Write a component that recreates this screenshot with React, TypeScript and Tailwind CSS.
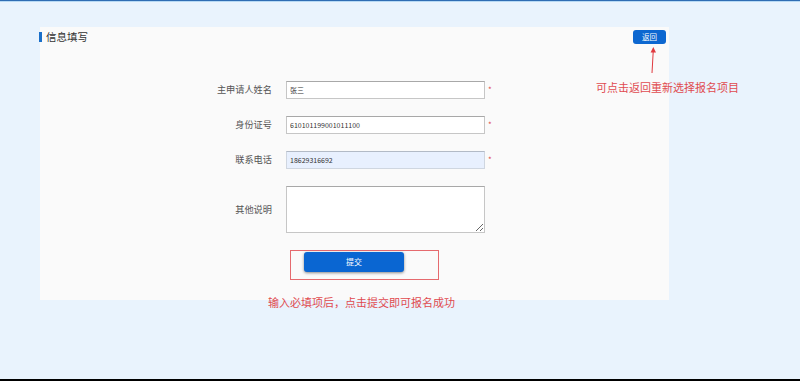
import React from "react";

const sans = { fontFamily: '"Noto Sans CJK SC", "Noto Sans", sans-serif' };

function Row({ label, children, required = true }: { label: string; children: React.ReactNode; required?: boolean }) {
  return (
    <div className="flex items-center">
      <div className="w-[232px] text-right text-[9.2px] text-[#555] leading-none">{label}</div>
      <div className="ml-[14px] flex">{children}</div>
      {required ? <span className="ml-[3px] text-[8px] text-[#e04848] leading-none">*</span> : null}
    </div>
  );
}

const inputCls =
  "block w-[199px] h-[18px] border border-[#c6c6c6] border-t-[#a8a8a8] bg-white px-[3px] text-[7px] leading-none text-[#333] outline-none";

export default function App() {
  return (
    <div className="relative w-[800px] h-[381px] bg-[#e9f3fd] flex flex-col overflow-hidden" style={sans}>
      <div className="h-[1px] bg-[#2f6db3]" />
      <div className="h-[1px] bg-[#b7d9f4]" />
      <div className="flex-1 pt-[25px] pl-[40px]">
        <div className="w-[629px] h-[273px] bg-[#fafafa] flex flex-col">
          <div className="flex items-center justify-between pt-[3px] pr-[3px] h-[17px]">
            <div className="flex items-center">
              <div className="w-[3px] h-[10px] bg-[#1a6fc9] -ml-[1px]" />
              <span className="ml-[4px] text-[10.5px] text-[#333] leading-none">信息填写</span>
            </div>
            <button className="w-[33px] h-[14px] rounded-[3px] bg-[#0d67d0] text-white text-[7.5px] leading-none flex items-center justify-center">
              返回
            </button>
          </div>
          <div className="mt-[37px] flex flex-col gap-[17px]">
            <Row label="主申请人姓名">
              <input readOnly value="张三" className={inputCls} />
            </Row>
            <Row label="身份证号">
              <input readOnly value="610101199001011100" className={inputCls} />
            </Row>
            <Row label="联系电话">
              <input
                readOnly
                value="18629316692"
                className="block w-[199px] h-[18px] border border-[#cfd6e0] border-t-[#b2bac6] bg-[#e8f0fe] px-[3px] text-[7px] leading-none text-[#333] outline-none"
              />
            </Row>
            <Row label="其他说明" required={false}>
              <textarea
                readOnly
                className="block w-[199px] h-[47px] border border-[#c6c6c6] border-t-[#a8a8a8] bg-white outline-none"
              />
            </Row>
          </div>
          <div className="mt-[17px] ml-[250px] w-[149px] h-[30px] border border-[#e56a6e] pl-[13px] pt-[1px]">
            <button className="w-[100px] h-[20px] rounded-[3px] bg-[#0a66d2] shadow-[0_1px_3px_rgba(0,0,0,0.45)] text-white text-[8px] leading-none flex items-center justify-center">
              提交
            </button>
          </div>
        </div>
      </div>
      <div className="h-[2px] bg-black" />

      <svg className="absolute left-[648px] top-[46px]" width="10" height="28" viewBox="0 0 10 28">
        <line x1="5.3" y1="4" x2="4" y2="27" stroke="#e0393e" strokeWidth="1" />
        <polygon points="5.3,1 2.6,6.5 8,6.5" fill="#e0393e" />
      </svg>
      <div className="absolute left-[596px] top-[80px] text-[11px] leading-[14px] text-[#e04a4f] whitespace-nowrap">
        可点击返回重新选择报名项目
      </div>
      <div className="absolute left-[268px] top-[295px] text-[11px] leading-[14px] text-[#e04a4f] whitespace-nowrap">
        输入必填项后，点击提交即可报名成功
      </div>
    </div>
  );
}
